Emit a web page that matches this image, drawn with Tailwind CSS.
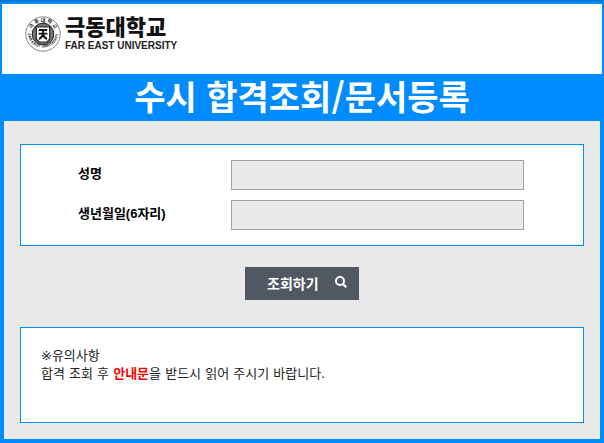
<!DOCTYPE html>
<html lang="ko">

<head>
  <meta charset="UTF-8" />
  <meta name="viewport" content="width=device-width, initial-scale=1.0" />
  <title>수시 합격조회/문서등록</title>
  <script src="https://cdn.jsdelivr.net/npm/@tailwindcss/browser@4"></script>
</head>

<body class="min-h-screen flex flex-col bg-[#008cff] border-t-2 border-[#0078dc] font-['Noto_Sans_CJK_KR',sans-serif] text-black">

  <!-- 로고 -->
  <header class="mt-0.5 mx-0.5 h-[70px] bg-white px-[23px] pt-3">
    <a href="#" class="flex items-center gap-1 w-max">
      <svg class="size-9 shrink-0" viewBox="0 0 36 36" aria-hidden="true">
        <defs>
          <path id="ringTop" d="M5.6 18a12.4 12.4 0 0 1 24.8 0" />
          <path id="ringBottom" d="M2.4 16a15.6 15.6 0 1 0 31.2 0" />
        </defs>
        <circle cx="18" cy="18" r="17.2" fill="#fff" stroke="#666" stroke-width="0.8" />
        <text font-size="5" font-weight="700" fill="#222" text-anchor="middle"><textPath href="#ringTop" startOffset="50%">극 동 대 학 교</textPath></text>
        <text font-family="Liberation Sans" font-size="4" font-weight="700" fill="#222" text-anchor="middle"><textPath href="#ringBottom" startOffset="50%">FAR EAST UNIVERSITY</textPath></text>
        <circle cx="18" cy="18" r="10.8" fill="#777" stroke="#222" stroke-width="1" />
        <path d="M11.3 11h13.4v12l-2.7 3h-8l-2.7-3z" fill="#fff" stroke="#222" stroke-width="1.2" />
        <path d="M13.8 14h8.4M13.6 17.6h8.8M18 14v3.6q-.5 3.8-4 5.5M18 17.6q.5 3.8 4 5.5" fill="none" stroke="#111" stroke-width="1.9" />
      </svg>
      <span class="flex flex-col items-start">
        <span class="text-[22px] leading-[18px] pb-1.5 font-black text-[#111]">극동대학교</span>
        <span class="text-[10px] leading-3 font-bold text-[#222] font-['Liberation_Sans',sans-serif]">FAR EAST UNIVERSITY</span>
      </span>
    </a>
  </header>

  <h1 class="h-[47px] text-center text-[34px] leading-[44px] font-bold text-white">수시 합격조회/문서등록</h1>

  <main class="flex-1 mx-1 mb-1 bg-[#e9e9e9] px-4 pt-[23px] pb-4">
    <form>
      <!-- 입력 -->
      <div class="flex flex-col gap-2.5 bg-white border border-[#008cff] py-[15px] pl-[57px] pr-[59px] text-[13px] font-bold font-['Liberation_Sans','Noto_Sans_CJK_KR',sans-serif]">
        <div class="flex items-center">
          <label for="name" class="flex-1 leading-5 pb-0.5">성명</label>
          <input id="name" type="text" class="w-[293px] h-[30px] px-2 bg-[#eaeaea] border border-[#a0a0a0]" />
        </div>
        <div class="flex items-center">
          <label for="birth" class="flex-1 leading-5 pb-0.5">생년월일(6자리)</label>
          <input id="birth" type="text" maxlength="6" class="w-[293px] h-[30px] px-2 bg-[#eaeaea] border border-[#a0a0a0]" />
        </div>
      </div>

      <button type="submit" class="mt-[21px] mx-auto flex items-center justify-between w-[114px] h-[33px] pl-[22px] pr-3 pb-0.5 bg-[#515862] text-sm font-bold text-white">
        조회하기
        <svg class="size-3 mb-0.5" viewBox="0 0 12 12" fill="none" stroke="currentColor" aria-hidden="true">
          <circle cx="5" cy="5" r="4" stroke-width="2" />
          <path d="M8 8l3.2 3.2" stroke-width="2.4" />
        </svg>
      </button>
    </form>

    <!-- 유의사항 -->
    <section class="mt-[27px] h-24 bg-white border border-[#008cff] px-5 pt-[19px] text-[13px] leading-[18px] text-[#222] font-['DejaVu_Sans','Noto_Sans_CJK_KR',sans-serif]">
      <p>※유의사항</p>
      <p>합격 조회 후 <strong class="text-[#ff0000]">안내문</strong>을 받드시 읽어 주시기 바랍니다.</p>
    </section>
  </main>

</body>

</html>
